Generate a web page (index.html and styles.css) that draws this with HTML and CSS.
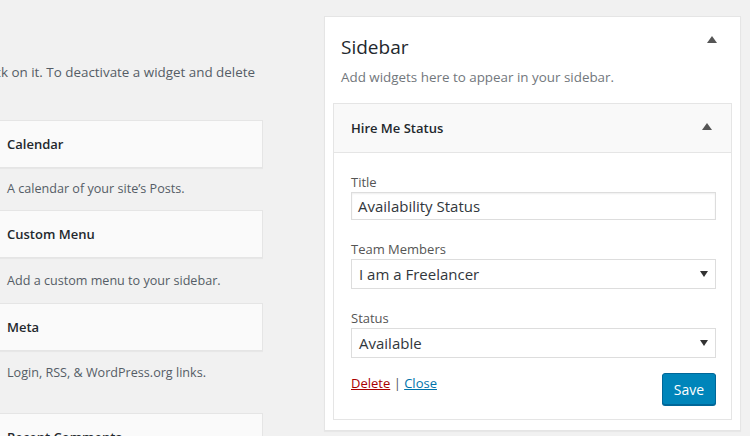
FILE: index.html
```html
<!DOCTYPE html>
<html>
<head>
<meta charset="utf-8">
<link rel="stylesheet" href="styles.css">
</head>
<body>
<div class="page">
  <div class="available">
    <div class="intro"><span>To activate a widget drag it to a sidebar or click on it. To deactivate a widget and delete</span></div>
    <div class="widget-card">Calendar</div>
    <div class="widget-desc d1">A calendar of your site’s Posts.</div>
    <div class="widget-card">Custom Menu</div>
    <div class="widget-desc d2">Add a custom menu to your sidebar.</div>
    <div class="widget-card">Meta</div>
    <div class="widget-desc d3">Login, RSS, &amp; WordPress.org links.</div>
    <div class="widget-card">Recent Comments</div>
  </div>

  <div class="sidebar-panel">
    <div class="panel-head">
      <h2 class="panel-title">Sidebar</h2>
      <svg class="tri" width="10" height="7" viewBox="0 0 10 7"><path d="M5 0 L10 7 L0 7 Z" fill="#555"/></svg>
    </div>
    <p class="panel-desc">Add widgets here to appear in your sidebar.</p>

    <div class="widget">
      <div class="widget-top">
        <span class="widget-name">Hire Me Status</span>
        <svg class="tri" width="10" height="7" viewBox="0 0 10 7"><path d="M5 0 L10 7 L0 7 Z" fill="#555"/></svg>
      </div>
      <div class="widget-inside">
        <div class="field">
          <label class="field-label">Title</label>
          <div class="input">Availability Status</div>
        </div>
        <div class="field">
          <label class="field-label">Team Members</label>
          <div class="input select"><span>I am a Freelancer</span><svg width="8" height="6" viewBox="0 0 8 6"><path d="M0 0 L8 0 L4 6 Z" fill="#333"/></svg></div>
        </div>
        <div class="field last">
          <label class="field-label">Status</label>
          <div class="input select"><span>Available</span><svg width="8" height="6" viewBox="0 0 8 6"><path d="M0 0 L8 0 L4 6 Z" fill="#333"/></svg></div>
        </div>
        <div class="actions">
          <div class="links"><a class="delete" href="#">Delete</a> | <a class="close" href="#">Close</a></div>
          <button class="save">Save</button>
        </div>
      </div>
    </div>
  </div>
</div>
</body>
</html>
```

FILE: styles.css
```css
html, body {
  margin: 0;
  padding: 0;
  height: 100%;
  overflow: hidden;
}
body {
  background: #f1f1f1;
  font-family: "Open Sans", "Noto Sans", sans-serif;
  color: #23282d;
}
.page {
  display: flex;
  align-items: flex-start;
  height: 436px;
  overflow: hidden;
}
.available {
  width: 273px;
  height: 436px;
  overflow: hidden;
  margin-left: -10px;
  flex: none;
}
.intro {
  height: 120px;
  display: flex;
  justify-content: flex-end;
  overflow: hidden;
  white-space: nowrap;
  padding-right: 8px;
  box-sizing: border-box;
  font-size: 13.4px;
  color: #555d66;
}
.intro span {
  margin-top: 62px;
  line-height: 20px;
}
.widget-card {
  height: 48px;
  box-sizing: border-box;
  line-height: 46px;
  background: #fafafa;
  border: 1px solid #e5e5e5;
  box-shadow: 0 1px 1px rgba(0,0,0,0.04);
  padding-left: 16px;
  font-size: 13px;
  font-weight: 600;
  color: #23282d;
}
.widget-desc {
  padding-left: 17px;
  font-size: 12.6px;
  color: #555d66;
}
.d1 {
  height: 42px;
  line-height: 42px;
}
.d2 {
  height: 45px;
  line-height: 45px;
}
.d3 {
  height: 62px;
  line-height: 44px;
}
.sidebar-panel {
  margin-left: 61px;
  margin-top: 16px;
  width: 417px;
  height: 415px;
  box-sizing: border-box;
  background: #fff;
  border: 1px solid #e5e5e5;
  box-shadow: 0 1px 1px rgba(0,0,0,0.04);
  padding: 0 8px;
  flex: none;
}
.panel-head {
  display: flex;
  justify-content: space-between;
  align-items: flex-start;
  padding: 16px 15px 0 8px;
}
.panel-title {
  margin: 0;
  font-size: 19px;
  font-weight: 400;
  line-height: 28px;
  color: #23282d;
}
.panel-head .tri {
  margin-top: 3px;
}
.panel-desc {
  margin: 6px 0 0 8px;
  font-size: 13.4px;
  line-height: 20px;
  color: #72777c;
}
.widget {
  margin-top: 16px;
  border: 1px solid #e5e5e5;
  background: #fff;
}
.widget-top {
  height: 48px;
  background: #f9f9f9;
  border-bottom: 1px solid #e5e5e5;
  display: flex;
  justify-content: space-between;
  align-items: center;
  padding: 0 19px 0 17px;
}
.widget-name {
  font-size: 13px;
  font-weight: 600;
  color: #23282d;
}
.widget-top .tri {
  margin-top: -4px;
}
.widget-inside {
  padding: 20px 15px 14px 17px;
}
.field {
  margin-bottom: 20px;
}
.field.last {
  margin-bottom: 0;
}
.field-label {
  display: block;
  font-size: 13px;
  line-height: 18px;
  color: #555;
  margin-bottom: 1px;
}
.input {
  height: 28px;
  box-sizing: border-box;
  border: 1px solid #ddd;
  box-shadow: inset 0 1px 2px rgba(0,0,0,0.07);
  background: #fff;
  font-size: 15px;
  line-height: 26px;
  padding: 0 6px;
  color: #32373c;
}
.select {
  height: 30px;
  line-height: 28px;
  display: flex;
  justify-content: space-between;
  align-items: center;
  padding: 0 7px 0 7px;
  box-shadow: none;
}
.actions {
  display: flex;
  justify-content: space-between;
  align-items: flex-start;
  margin-top: 15px;
}
.links {
  font-size: 13px;
  color: #555;
  margin-top: 1px;
}
.delete {
  color: #a00;
}
.close {
  color: #0073aa;
}
.save {
  width: 54px;
  height: 32px;
  background: #0085ba;
  border: 1px solid #006799;
  border-radius: 3px;
  box-shadow: 0 1px 0 #006799;
  color: #fff;
  font-family: "Open Sans", "Noto Sans", sans-serif;
  font-size: 14px;
  padding: 0;
}
```
